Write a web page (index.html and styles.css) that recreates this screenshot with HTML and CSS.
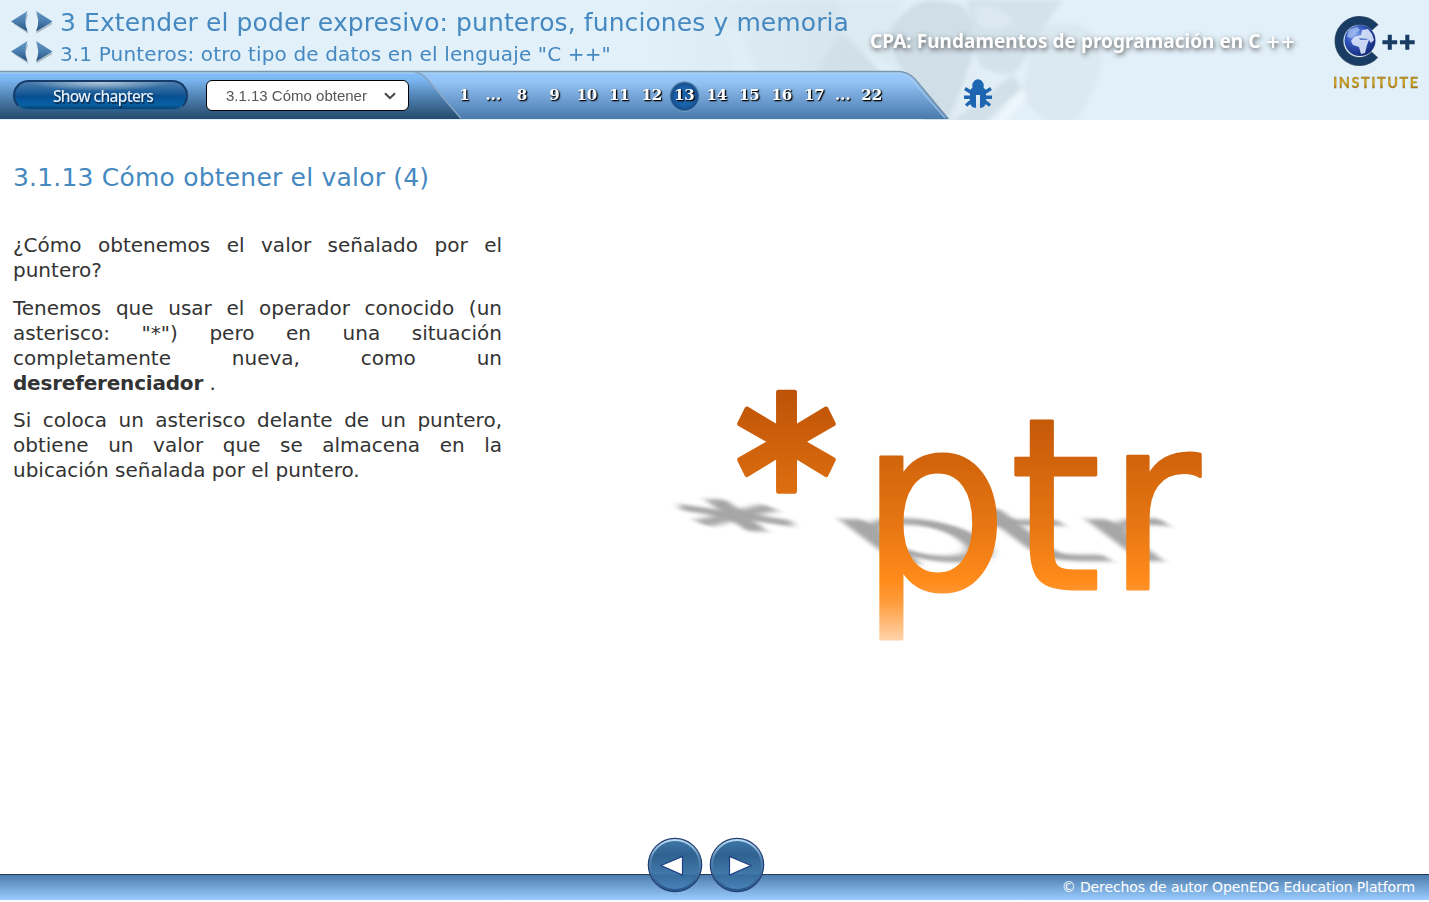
FILE: index.html
```html
<!DOCTYPE html>
<html lang="es">
<head>
<meta charset="utf-8">
<title>3.1.13 Cómo obtener el valor (4)</title>
<link rel="stylesheet" href="styles.css">
</head>
<body>
<svg width="0" height="0" class="defs">
  <defs>
    <linearGradient id="arrowFill" x1="0" y1="0" x2="0" y2="1"><stop offset="0" stop-color="#6395c0"/><stop offset=".5" stop-color="#4a7fb0"/><stop offset="1" stop-color="#254f78"/></linearGradient>
    <symbol id="pair" viewBox="0 0 44 28">
      <g class="arrow-shadow"><path d="M3 15 18 5 15 15 18 25ZM42.500 15 26 5 29 15 26 25Z" transform="translate(.3 .8)"/></g>
      <path d="M1 13.500 17.500 3Q13 13.500 17.500 23.500Z" fill="url(#arrowFill)"/>
      <path d="M42.500 13.500 26 3Q30.500 13.500 26 23.500Z" fill="url(#arrowFill)"/>
    </symbol>
    <linearGradient id="disc" x1="0" y1="0" x2="0" y2="1"><stop offset="0" stop-color="#3d76a8"/><stop offset=".3" stop-color="#2f628f"/><stop offset=".68" stop-color="#4179aa"/><stop offset=".7" stop-color="#366c9d"/><stop offset="1" stop-color="#4a86ba"/></linearGradient>
    <linearGradient id="rim" x1="0" y1="0" x2="0" y2="1"><stop offset="0" stop-color="#b9dcf5"/><stop offset=".35" stop-color="#5689b5"/><stop offset="1" stop-color="#2a568f"/></linearGradient>
  </defs>
</svg>
<header class="header">
  <svg class="backdrop" viewBox="0 0 1429 120" width="1429" height="120">
    <defs>
      <linearGradient id="darkBar" x1="0" y1="0" x2="0" y2="1"><stop offset="0" stop-color="#83bffa"/><stop offset=".15" stop-color="#7cb7f2"/><stop offset=".5" stop-color="#5486b8"/><stop offset="1" stop-color="#24496b"/></linearGradient>
      <linearGradient id="lightBar" x1="0" y1="0" x2="0" y2="1"><stop offset="0" stop-color="#9ccbfd"/><stop offset=".2" stop-color="#94c3f5"/><stop offset=".75" stop-color="#5f90c3"/><stop offset="1" stop-color="#4a79aa"/></linearGradient>
      <linearGradient id="fadeIn"><stop offset="0" stop-color="#c9d7de" stop-opacity="0"/><stop offset="1" stop-color="#c9d7de"/></linearGradient>
      <filter id="soft" x="-10%" y="-10%" width="120%" height="120%"><feGaussianBlur stdDeviation="2"/></filter>
    </defs>
    <g filter="url(#soft)">
      <path d="M650 0H838L843 35 880 72H650Z" fill="url(#fadeIn)" opacity=".5"/>
      <path d="M722 25 740 30 756 72H735Z" fill="#e4f1f8" opacity=".5"/>
      <path d="M843 32 862 50 880 72H815L830 50Z" fill="#c5d4dc" opacity=".3"/>
      <path d="M838 0H905L890 30 900 72 845 40Z" fill="#d4e2e9" opacity=".4"/>
      <path d="M890 30Q903 8 925 1Q950 0 963 6Q980 32 970 62L952 122H925Q910 80 896 60Z" fill="#c3d3dc" opacity=".62"/>
      <path d="M966 0H1062Q1050 18 1035 42 1026 62 1012 74 995 76 980 66 970 45 972 30Z" fill="#c9d8e0" opacity=".55"/>
      <path d="M975 8Q1000 4 1012 22 1000 34 978 24Z" fill="#e0edf4" opacity=".7"/>
      <path d="M972 58 985 78 1010 80 992 96 984 122H946L960 90Z" fill="#e0ecf3" opacity=".75"/>
      <path d="M1012 75 1023 88 985 122H950L974 106Z" fill="#c8d6dd" opacity=".6"/>
      <path d="M1040 28Q1080 15 1100 40 1108 70 1075 122H1050Q1022 105 1024 88L1030 55Z" fill="#d3e2ea" opacity=".5"/>
      <path d="M1024 88 1008 102 995 122H1006L1026 98Z" fill="#edf6fa"/>
    </g>
    <path d="M0 72H903Q909 73 914 78L949 119H0Z" fill="url(#lightBar)"/>
    <path d="M0 72H415Q422 73 427 79L462 119H0Z" fill="url(#darkBar)"/>
    <path d="M0 72.8H902" fill="none" stroke="#a9d1f4" stroke-width="1.4"/>
    <path d="M0 71.5H900Q908 72 915 79L948 118.500" fill="none" stroke="#7896ad" stroke-width="1.3"/>
    <path d="M898 73.500Q906 74 912 80L945 118" fill="none" stroke="#a7ccec" stroke-width="1.2" opacity=".8"/>
    <path d="M415 72Q422 73 427 79L461 118.500" fill="none" stroke="#88a6c2" stroke-width="1.5"/>
  </svg>
  <div class="top">
    <div class="titles">
      <div class="row row-1"><svg class="pair" width="44" height="28"><use href="#pair"/></svg><span class="chapter">3 Extender el poder expresivo: punteros, funciones y memoria</span></div>
      <div class="row row-2"><svg class="pair" width="44" height="28"><use href="#pair"/></svg><span class="section">3.1 Punteros: otro tipo de datos en el lenguaje "C ++"</span></div>
    </div>
    <div class="course">CPA: Fundamentos de programación en C <span class="wide">++</span></div>
    <svg class="logo" viewBox="1330 10 92 84" width="92" height="84">
      <defs>
        <radialGradient id="sea" cx=".35" cy=".3" r=".8"><stop offset="0" stop-color="#8bacee"/><stop offset=".4" stop-color="#3155bd"/><stop offset="1" stop-color="#10246e"/></radialGradient>
        <linearGradient id="gold" x1="0" y1="0" x2="0" y2="1"><stop offset="0" stop-color="#a97e1c"/><stop offset=".5" stop-color="#dcae1c"/><stop offset="1" stop-color="#9b6a0c"/></linearGradient>
      </defs>
      <circle cx="1359.500" cy="41" r="20.500" fill="none" stroke="#506578" stroke-width="9" stroke-dasharray="99 40" transform="rotate(41.500 1359.500 41)"/>
      <circle cx="1359.500" cy="41" r="20.500" fill="none" stroke="#193c64" stroke-width="7.800" stroke-dasharray="98 40" transform="rotate(43 1359.500 41)"/>
      <circle cx="1360" cy="40.500" r="15.500" fill="url(#sea)"/>
      <path d="M1349 30 1357 27 1360 30 1356 33 1352 38 1347 37Z" fill="#a4bdf0" opacity=".75"/>
      <path d="M1354 37 1361 35 1362 30 1368 29 1372 34 1374 40 1371 43 1369 40 1367 45 1365 53 1361 54 1359 47 1353 45 1351 41Z" fill="#dce7fb" opacity=".9"/>
      <path d="M1359 38 1369 39 1366 40 1360 40Z" fill="#5d7dcb"/>
      <text x="1381" y="48.500" class="plus">++</text>
      <text x="1333" y="87.500" class="institute" textLength="85">INSTITUTE</text>
    </svg>
  </div>
  <div class="toolbar">
    <button class="chapters"><span>Show chapters</span></button>
    <div class="select"><span>3.1.13 Cómo obtener</span><svg width="14" height="10" viewBox="0 0 14 10"><path d="M2 2.200 7 7.200 12 2.200" fill="none" stroke="#444" stroke-width="2"/></svg></div>
    <nav class="pages">
      <a class="end">1</a><a class="gap">...</a><a>8</a><a>9</a><a>10</a><a>11</a><a>12</a><a class="current">13</a><a>14</a><a>15</a><a>16</a><a>17</a><a class="gap">...</a><a class="end">22</a>
    </nav>
    <svg class="bug" viewBox="0 0 28 29" width="28" height="29">
      <path d="M8.500 8.500C8 5.500 8.500 4 9.500 3 11.500-.8 16.500-.8 18.500 3 19.500 4 20 5.500 19.500 8.500L22 11V23C22 26.500 19.500 28.800 16 28.800V16H12V28.800C8.500 28.800 6 26.500 6 23V11Z" fill="#1d66b1"/>
      <path d="M8 14 1 9.500M8 18.200H0M8 21.500 2 26.500M20 14 27 9.500M20 18.200H28M20 21.500 26 26.500" stroke="#1d66b1" stroke-width="3.400" fill="none"/>
    </svg>
  </div>
</header>
<main class="content">
  <article class="lesson">
    <h1>3.1.13 Cómo obtener el valor (4)</h1>
    <p>¿Cómo obtenemos el valor señalado por el puntero?</p>
    <p>Tenemos que usar el operador conocido (un asterisco: "*") pero en una situación completamente nueva, como un <b>desreferenciador</b> .</p>
    <p>Si coloca un asterisco delante de un puntero, obtiene un valor que se almacena en la ubicación señalada por el puntero.</p>
  </article>
  <svg class="figure" viewBox="660 340 560 340" width="560" height="340">
    <defs>
      <linearGradient id="orange" gradientUnits="userSpaceOnUse" x1="0" y1="-200" x2="0" y2="52"><stop offset="0" stop-color="#bc5207"/><stop offset=".25" stop-color="#cf620b"/><stop offset=".55" stop-color="#e87713"/><stop offset=".76" stop-color="#ff8b1a"/><stop offset=".85" stop-color="#ff9c3d"/><stop offset="1" stop-color="#ffd3aa"/></linearGradient>
      <linearGradient id="orangeStar" gradientUnits="userSpaceOnUse" x1="0" y1="-153" x2="0" y2="-47"><stop offset="0" stop-color="#bc5207"/><stop offset="1" stop-color="#e07010"/></linearGradient>
      <filter id="blur" filterUnits="userSpaceOnUse" x="640" y="360" width="620" height="320"><feGaussianBlur stdDeviation="3.500 6"/></filter>
      <clipPath id="ground"><rect x="660" y="380" width="600" height="218"/></clipPath>
    </defs>
    <g transform="matrix(1 0 .41 .31 -226.700 378.600)" opacity=".4" filter="url(#blur)" fill="#222" stroke="#222">
      <g clip-path="url(#ground)">
        <text class="star" transform="translate(782 549.500) scale(.96 1.055)" text-anchor="middle">*</text>
        <text class="glyph" transform="translate(859.500 588.500) scale(.965 1)">p</text>
        <text class="glyph" transform="translate(1009.500 588.500) scale(.965 .985)">t</text>
        <text class="glyph" transform="translate(1107 588.500) scale(.93 1)">r</text>
      </g>
    </g>
    <g fill="url(#orange)" stroke="url(#orange)">
      <text class="star gradient-star" transform="translate(786.500 549.500) scale(.96 1.055)" text-anchor="middle">*</text>
      <text class="glyph" transform="translate(859.500 588.500) scale(.965 .992)">p</text>
      <text class="glyph" transform="translate(1009.500 589) scale(.965 .985)">t</text>
      <text class="glyph" transform="translate(1107 588.500) scale(.935 1)">r</text>
    </g>
  </svg>
</main>
<footer class="footer">
  <div class="pager">
    <svg width="56" height="56" viewBox="0 0 56 56"><circle cx="28" cy="28" r="27.300" fill="#233f70"/><circle cx="28" cy="28" r="25" fill="url(#disc)" stroke="url(#rim)" stroke-width="2.200"/><path d="M14 28.500 35.500 19.500V38Z" fill="#fff" stroke="#1f3f86" stroke-width="1.200"/></svg>
    <svg width="56" height="56" viewBox="0 0 56 56"><circle cx="28" cy="28" r="27.300" fill="#233f70"/><circle cx="28" cy="28" r="25" fill="url(#disc)" stroke="url(#rim)" stroke-width="2.200"/><path d="M42 28.500 20.500 19.500V38Z" fill="#fff" stroke="#1f3f86" stroke-width="1.200"/></svg>
  </div>
  <div class="copyright"><span>© Derechos de autor OpenEDG Education Platform</span></div>
</footer>
</body>
</html>
```
FILE: styles.css
```css
* { box-sizing: border-box; }
body { margin: 0; height: 902px; display: flex; flex-direction: column; background: #fff; color: #333; font-family: Verdana, "DejaVu Sans", sans-serif; overflow: hidden; }
.defs { position: absolute; }
.arrow-shadow { fill: #697f92; opacity: .45; }
.header { position: relative; height: 120px; flex: none; background: #e2f0f9; }
.backdrop { position: absolute; left: 0; top: 0; }
.top { position: relative; height: 72px; display: flex; }
.titles { width: 870px; padding-left: 10px; }
.row { display: flex; align-items: center; white-space: nowrap; color: #4688c0; }
.row-1 { height: 38px; padding-top: 5px; }
.row-2 { height: 28px; }
.pair { margin-right: 6px; flex: none; }
.chapter { font-size: 25px; letter-spacing: .1px; padding-top: 1px; }
.section { font-size: 20px; letter-spacing: .14px; padding-top: 4px; }
.course { width: 460px; padding-top: 29px; font: bold 19px/24px "Noto Sans", sans-serif; color: #fff; text-shadow: 1px 2px 5px #555; white-space: nowrap; letter-spacing: .04px; }
.wide { font: bold 18px/20px "DejaVu Sans", sans-serif; }
.logo { margin-top: 10px; }
.plus { font: bold 21px "DejaVu Sans", sans-serif; fill: #193c64; stroke: #193c64; stroke-width: 1.6px; }
.institute { font: bold 14.5px Lato, sans-serif; fill: url(#gold); stroke: #8c7540; stroke-width: .3px; }
.toolbar { position: relative; height: 48px; display: flex; padding-left: 13px; align-items: center; }
.chapters { width: 175px; height: 31px; margin: -1px 18px 0 0; padding: 0 0 0 5px; border: 2px solid #153c6a; border-bottom-color: #28608e; border-radius: 16px; background: radial-gradient(ellipse 70px 9px at 50% 0, #b4c9db, transparent), linear-gradient(#4c7fae 0, #1b5c98 40%, #0b508e 52%, #07539a 60%, #0761a3 85%, #083e73 100%); color: #e7f0f8; font: 500 15.5px "Noto Sans", sans-serif; letter-spacing: -.65px; text-shadow: 1px 2px 1px #0b2d50; }
.select { width: 203px; height: 31px; margin-top: -1px; padding: 0 11px 0 19px; border: 1px solid #000; border-radius: 6px; background: #fff; display: flex; align-items: center; justify-content: space-between; color: #555; font: 15px "Liberation Sans", sans-serif; }
.pages { margin-left: 39px; display: flex; align-items: center; font: bold 15px "DejaVu Serif", serif; color: #fff; text-shadow: 1px 1px 1px #000, 1px 1px 2px #222; }
.pages a { width: 32.5px; height: 31px; line-height: 28px; text-align: center; }
.pages .gap { width: 24.6px; }
.pages .end { width: 33px; }
.pages .current { border-radius: 50%; background: radial-gradient(circle at 50% 50%, #1b66b3 0, #1b62ab 9px, #174f8e 13px, #3e6f9f 14px, #6f9dc7 15px, transparent 15.5px); }
.bug { margin: -5px 0 0 76px; }
.content { flex: 1; display: flex; padding-left: 13px; }
.lesson { width: 489px; padding-top: 40px; font-size: 20px; line-height: 25px; text-align: justify; }
.lesson h1 { margin: 0 0 38px; font-weight: normal; font-size: 25px; line-height: 35px; letter-spacing: .2px; color: #4688c0; white-space: nowrap; }
.lesson p { margin: 0 0 12.5px; }
.lesson b { letter-spacing: -.2px; }
.figure { margin: 220px 0 0 158px; }
.glyph { font: 243px "DejaVu Sans", sans-serif; stroke-width: 3px; stroke-linejoin: round; }
.star { font: bold 202px "DejaVu Sans", sans-serif; stroke-width: 5px; stroke-linejoin: round; }
.gradient-star { fill: url(#orangeStar); stroke: url(#orangeStar); }
.footer { position: relative; height: 64px; flex: none; display: flex; flex-direction: column; justify-content: flex-end; padding-bottom: 2px; }
.pager { position: absolute; left: 647px; top: -1px; display: flex; gap: 6px; }
.copyright { height: 26px; border-top: 1px solid #203d5c; background: linear-gradient(#4d7dad, #9bccff); display: flex; justify-content: flex-end; align-items: center; padding: 0 14px 2px 0; color: #fff; font-size: 14px; letter-spacing: -.1px; }
```
